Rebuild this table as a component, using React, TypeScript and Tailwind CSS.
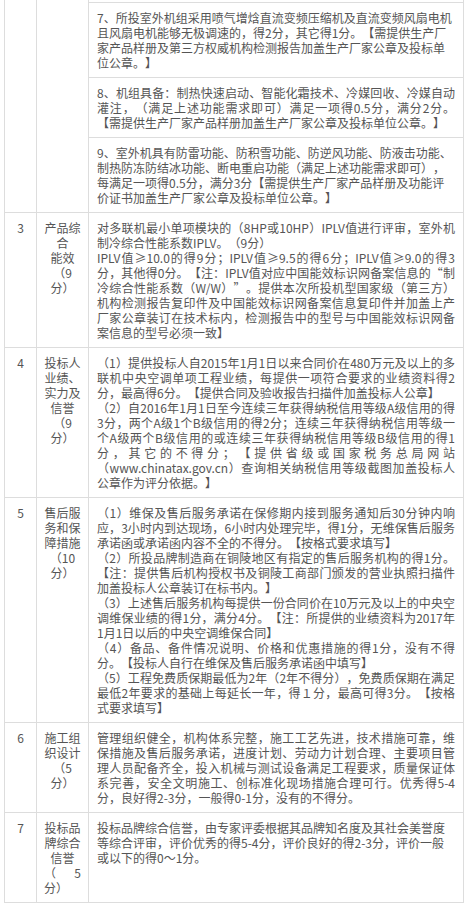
import React from "react";

type L = [string, boolean];

const Lines = ({ lines }: { lines: L[] }) => (
  <>
    {lines.map(([t, j], i) => (
      <div key={i} className={j ? "text-justify [text-align-last:justify]" : "text-left"}>
        {t}
      </div>
    ))}
  </>
);

const item7: L[] = [
  ["7、所投室外机组采用喷气增焓直流变频压缩机及直流变频风扇电机", false],
  ["且风扇电机能够无极调速的，得2分，其它得1分。【需提供生产厂", false],
  ["家产品样册及第三方权威机构检测报告加盖生产厂家公章及投标单", false],
  ["位公章。】", false],
];
const item8: L[] = [
  ["8、机组具备：制热快速启动、智能化霜技术、冷媒回收、冷媒自动", true],
  ["灌注，（满足上述功能需求即可）满足一项得0.5分，满分2分。", true],
  ["【需提供生产厂家产品样册加盖生产厂家公章及投标单位公章。】", false],
];
const item9: L[] = [
  ["9、室外机具有防雷功能、防积雪功能、防逆风功能、防液击功能、", false],
  ["制热防冻防结冰功能、断电重启功能（满足上述功能需求即可），", false],
  ["每满足一项得0.5分，满分3分【需提供生产厂家产品样册及功能评", false],
  ["价证书加盖生产厂家公章及投标单位公章。】", false],
];

const row3: L[] = [
  ["对多联机最小单项模块的（8HP或10HP）IPLV值进行评审，室外机", true],
  ["制冷综合性能系数IPLV。（9分）", false],
  ["IPLV值≥10.0的得9分；IPLV值≥9.5的得6分；IPLV值≥9.0的得3", true],
  ["分，其他得0分。【注：IPLV值对应中国能效标识网备案信息的“制", true],
  ["冷综合性能系数（W/W）”。提供本次所投机型国家级（第三方）", true],
  ["机构检测报告复印件及中国能效标识网备案信息复印件并加盖上产", true],
  ["厂家公章装订在技术标内，检测报告中的型号与中国能效标识网备", true],
  ["案信息的型号必须一致】", false],
];
const row4: L[] = [
  ["（1）提供投标人自2015年1月1日以来合同价在480万元及以上的多", true],
  ["联机中央空调单项工程业绩，每提供一项符合要求的业绩资料得2", true],
  ["分，最高得6分。【提供合同及验收报告扫描件加盖投标人公章】", false],
  ["（2）自2016年1月1日至今连续三年获得纳税信用等级A级信用的得", true],
  ["3分，两个A级1个B级信用的得2分；连续三年获得纳税信用等级一", true],
  ["个A级两个B级信用的或连续三年获得纳税信用等级B级信用的得1", true],
  ["分，其它的不得分；【提供省级或国家税务总局网站", true],
  ["（www.chinatax.gov.cn）查询相关纳税信用等级截图加盖投标人", true],
  ["公章作为评分依据。】", false],
];
const row5: L[] = [
  ["（1）维保及售后服务承诺在保修期内接到服务通知后30分钟内响", true],
  ["应，3小时内到达现场，6小时内处理完毕，得1分，无维保售后服务", true],
  ["承诺函或承诺函内容不全的不得分。【按格式要求填写】", false],
  ["（2）所投品牌制造商在铜陵地区有指定的售后服务机构的得1分。", true],
  ["【注：提供售后机构授权书及铜陵工商部门颁发的营业执照扫描件", true],
  ["加盖投标人公章装订在标书内。】", false],
  ["（3）上述售后服务机构每提供一份合同价在10万元及以上的中央空", true],
  ["调维保业绩的得1分，满分4分。【注：所提供的业绩资料为2017年", true],
  ["1月1日以后的中央空调维保合同】", false],
  ["（4）备品、备件情况说明、价格和优惠措施的得1分，没有不得", true],
  ["分。【投标人自行在维保及售后服务承诺函中填写】", false],
  ["（5）工程免费质保期最低为2年（2年不得分），免费质保期在满足", true],
  ["最低2年要求的基础上每延长一年，得１分，最高可得3分。【按格", true],
  ["式要求填写】", false],
];
const row6: L[] = [
  ["管理组织健全，机构体系完整，施工工艺先进，技术措施可靠，维", true],
  ["保措施及售后服务承诺，进度计划、劳动力计划合理、主要项目管", true],
  ["理人员配备齐全，投入机械与测试设备满足工程要求，质量保证体", true],
  ["系完善，安全文明施工、创标准化现场措施合理可行。优秀得5-4", true],
  ["分，良好得2-3分，一般得0-1分，没有的不得分。", false],
];
const row7: L[] = [
  ["投标品牌综合信誉，由专家评委根据其品牌知名度及其社会美誉度", false],
  ["等综合评审，评价优秀的得5-4分，评价良好的得2-3分，评价一般", false],
  ["或以下的得0～1分。", false],
];

const B = "border-[#dddddd]";

const Row = ({ no, name, lines }: { no: string; name: React.ReactNode; lines: L[] }) => (
  <div className={`flex border-t ${B}`}>
    <div className={`w-[32px] shrink-0 border-l ${B} py-[7px] text-center`}>{no}</div>
    <div className={`w-[52px] shrink-0 border-l ${B} py-[7px] px-[7px] text-center`}>{name}</div>
    <div className={`flex-1 border-l ${B} py-[7px] px-[8px]`}>
      <Lines lines={lines} />
    </div>
  </div>
);

const Name = ({ items }: { items: string[] }) => (
  <>
    {items.map((t, i) => (
      <div key={i}>{t}</div>
    ))}
  </>
);

export default function App() {
  return (
    <div className="min-h-[907px] bg-white pl-[4px] text-[12px] leading-[15px] text-[#555] font-['Noto_Sans_CJK_SC',sans-serif] [text-spacing-trim:space-all]">
      <div className={`w-[460px] border-r border-b ${B}`}>
        <div className="flex">
          <div className={`w-[32px] shrink-0 border-l ${B}`} />
          <div className={`w-[52px] shrink-0 border-l ${B}`} />
          <div className={`flex flex-1 flex-col border-l ${B}`}>
            <div className="h-[2px]" />
            <div className={`border-t ${B} py-[7px] px-[8px]`}>
              <Lines lines={item7} />
            </div>
            <div className={`border-t ${B} py-[7px] px-[8px]`}>
              <Lines lines={item8} />
            </div>
            <div className={`border-t ${B} py-[7px] px-[8px]`}>
              <Lines lines={item9} />
            </div>
          </div>
        </div>
        <Row no="3" name={<Name items={["产品综", "合", "能效", "（9", "分）"]} />} lines={row3} />
        <Row no="4" name={<Name items={["投标人", "业绩、", "实力及", "信誉", "（9", "分）"]} />} lines={row4} />
        <Row no="5" name={<Name items={["售后服", "务和保", "障措施", "（10", "分）"]} />} lines={row5} />
        <Row no="6" name={<Name items={["施工组", "织设计", "（5", "分）"]} />} lines={row6} />
        <Row
          no="7"
          name={
            <>
              <div>投标品</div>
              <div>牌综合</div>
              <div>信誉</div>
              <div className="flex justify-between">
                <span>（</span>
                <span>5</span>
              </div>
              <div className="text-left">分）</div>
            </>
          }
          lines={row7}
        />
      </div>
    </div>
  );
}
